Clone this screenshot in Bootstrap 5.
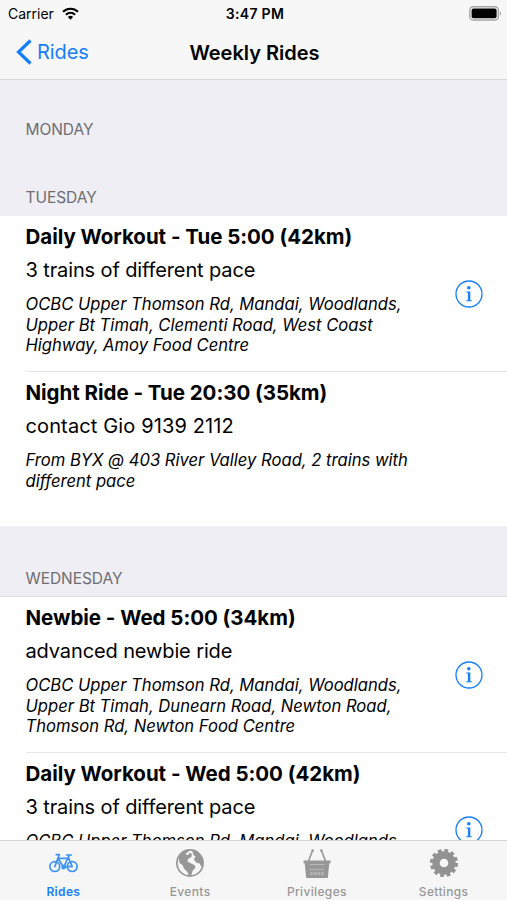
<!DOCTYPE html>
<html lang="en">
<head>
<meta charset="utf-8">
<meta name="viewport" content="width=device-width, initial-scale=1">
<title>Weekly Rides</title>
<link href="https://cdn.jsdelivr.net/npm/bootstrap@5.3.0/dist/css/bootstrap.min.css" rel="stylesheet">
<style>
  :root { --ios-blue: #157efb; --ios-gray: #979797; }
  body { font-family: Inter, "Liberation Sans", sans-serif; color: #000; background: #efeef4; font-feature-settings: "calt" 0; }
  .top-chrome { height: 80px; background: #f7f7f8; border-bottom: 1px solid #d9d9dc; }
  .status-row { height: 27px; font-size: 14px; padding: 0 5px 0 8px; }
  .status-row .carrier { letter-spacing: 0; }
  .status-time { font-weight: 600; font-size: 14px; letter-spacing: .3px; }
  .title-row { height: 52px; padding: 0 14px 0 16px; }
  .back-link { color: var(--ios-blue); font-size: 20px; letter-spacing: -.1px; gap: 5px; padding-top: 2px; }
  .page-title { font-size: 20px; font-weight: 600; letter-spacing: 0; line-height: 24px; }
  .day-head { height: 68px; padding: 0 25.5px 8px; font-size: 15.5px; line-height: 21px; color: #6d6d72; letter-spacing: -.06px; }
  .day-head.spaced { height: 71px; padding-bottom: 7px; border-bottom: 1px solid #dcdce0; }
  .ride { height: 155px; padding: 6px 24px 0 0; margin-left: 25.5px; }
  .ride + .ride { border-top: 1px solid #e6e6e8; }
  .ride-name { font-size: 20.5px; font-weight: 650; line-height: 30px; margin-bottom: 3px; letter-spacing: -.03px; }
  .ride-note { font-size: 20px; line-height: 30px; margin-bottom: 9px; letter-spacing: -.12px; }
  .ride-note.contact { letter-spacing: .13px; }
  .ride-route { font-size: 16.6px; line-height: 20.6px; font-style: italic; letter-spacing: 0; }
  .info-icon { margin-bottom: 6px; }
  .tabs { height: 60px; background: #f6f6f6; border-top: 1px solid #d4d4d6; font-size: 12px; font-weight: 500; color: var(--ios-gray); letter-spacing: .35px; }
  .tabs .tab-label { line-height: 16px; margin-top: 5px; }
  .tabs .current { color: var(--ios-blue); font-weight: 600; }
  svg { display: block; }
</style>
<script src="https://cdn.jsdelivr.net/npm/bootstrap@5.3.0/dist/js/bootstrap.bundle.min.js"></script>
</head>
<body class="vh-100 overflow-hidden d-flex flex-column">
<svg class="d-none">
  <symbol id="info" viewBox="0 0 28 28">
    <circle cx="14" cy="14" r="13" fill="none" stroke="#157efb" stroke-width="1.3"/>
    <circle cx="13.8" cy="7.8" r="1.8" fill="#157efb"/>
    <path d="M11.300 11.400h4v8.800h1.500v1.100h-5.500v-1.100h1.600v-7.700h-1.600z" fill="#157efb"/>
  </symbol>
</svg>

<header class="top-chrome flex-shrink-0">
  <div class="status-row row g-0 align-items-center">
    <div class="col d-flex align-items-center gap-2">
      <span class="carrier">Carrier</span>
      <svg width="17" height="13" viewBox="0 0 17 13">
        <g fill="none" stroke="#000" stroke-width="2.1">
          <path d="M1 4.800a10.600 10.600 0 0 1 15 0"/>
          <path d="M3.900 7.700a6.500 6.500 0 0 1 9.200 0"/>
        </g>
        <path d="M8.500 12.700 5.900 10a3.700 3.700 0 0 1 5.200 0z"/>
      </svg>
    </div>
    <div class="col-auto status-time">3:47 PM</div>
    <div class="col d-flex justify-content-end">
      <svg width="33" height="15" viewBox="0 0 33 15">
        <rect x=".8" y=".8" width="28.6" height="13.2" rx="3.6" fill="#f7f7f8" stroke="#a5a5a6" stroke-width="1.4"/>
        <rect x="2.6" y="2.6" width="25" height="9.6" rx="1.8"/>
        <path d="M30.900 5.200c1.500.7 1.500 3.700 0 4.400z" fill="#a5a5a6"/>
      </svg>
    </div>
  </div>
  <div class="title-row row g-0 align-items-center">
    <div class="col">
      <a class="back-link d-inline-flex align-items-center text-decoration-none" href="#">
        <svg width="16" height="26" viewBox="0 0 16 26"><path d="M14.500 1.500 2.500 13l12 11.500" fill="none" stroke="#157efb" stroke-width="3.2"/></svg>
        <span>Rides</span>
      </a>
    </div>
    <h1 class="page-title col-auto mb-0">Weekly Rides</h1>
    <div class="col"></div>
  </div>
</header>

<main class="flex-grow-1 overflow-hidden">
  <h2 class="day-head mb-0 fw-normal d-flex align-items-end">MONDAY</h2>
  <h2 class="day-head mb-0 fw-normal d-flex align-items-end">TUESDAY</h2>
  <section class="bg-white">
    <article class="ride d-flex justify-content-between">
      <div class="text-nowrap">
        <div class="ride-name">Daily Workout - Tue 5:00 (42km)</div>
        <div class="ride-note">3 trains of different pace</div>
        <div class="ride-route">OCBC Upper Thomson Rd, Mandai, Woodlands,<br>Upper Bt Timah, Clementi Road, West Coast<br>Highway, Amoy Food Centre</div>
      </div>
      <svg class="info-icon align-self-center" width="28" height="28"><use href="#info"/></svg>
    </article>
    <article class="ride">
      <div class="ride-name">Night Ride - Tue 20:30 (35km)</div>
      <div class="ride-note contact">contact Gio 9139 2112</div>
      <div class="ride-route">From BYX @ 403 River Valley Road, 2 trains with<br>different pace</div>
    </article>
  </section>
  <h2 class="day-head spaced mb-0 fw-normal d-flex align-items-end">WEDNESDAY</h2>
  <section class="bg-white">
    <article class="ride d-flex justify-content-between">
      <div class="text-nowrap">
        <div class="ride-name">Newbie - Wed 5:00 (34km)</div>
        <div class="ride-note">advanced newbie ride</div>
        <div class="ride-route">OCBC Upper Thomson Rd, Mandai, Woodlands,<br>Upper Bt Timah, Dunearn Road, Newton Road,<br>Thomson Rd, Newton Food Centre</div>
      </div>
      <svg class="info-icon align-self-center" width="28" height="28"><use href="#info"/></svg>
    </article>
    <article class="ride d-flex justify-content-between">
      <div class="text-nowrap">
        <div class="ride-name">Daily Workout - Wed 5:00 (42km)</div>
        <div class="ride-note">3 trains of different pace</div>
        <div class="ride-route">OCBC Upper Thomson Rd, Mandai, Woodlands,</div>
      </div>
      <svg class="info-icon align-self-center" width="28" height="28"><use href="#info"/></svg>
    </article>
  </section>
</main>

<nav class="tabs row g-0 flex-shrink-0 text-center pt-2">
  <div class="col current d-flex flex-column align-items-center">
    <svg width="30" height="30" viewBox="0 0 30 30" fill="none" stroke="#3d93f8" stroke-width="1.700">
      <circle cx="6.800" cy="17.600" r="4.900"/><circle cx="24.200" cy="17.600" r="4.900"/>
      <path d="M6.800 17.600 11.300 5.600H8.200M10.200 9.400H20.800M10.200 9.800l5.400 8.400M15.600 18.200 21.300 6.400M24.200 17.600h-8.600M20.600 9.200l3.600 8.400M18.600 6h4.800" stroke-linejoin="round" stroke-linecap="round"/>
      <circle cx="15.600" cy="18.200" r="1.500"/>
    </svg>
    <div class="tab-label">Rides</div>
  </div>
  <div class="col d-flex flex-column align-items-center">
    <svg width="30" height="30" viewBox="0 0 30 30">
      <circle cx="15" cy="14" r="13.100" fill="#f6f6f6" stroke="#979797" stroke-width="1.700"/>
      <path fill="#979797" d="M3.500 7.500C6 3.500 10 1 14.500 1l-1.700 2.600-2.300.6 1.200 1.900 2.200-.5.800-2 2.300 1.400-.6 3-3 1.800-1.200 2.500 4 2.200 3.300 1.500 1 2.500-3 3.500-1.200 4.200-2.500.8-1.300-4-3.500-3.500-1.500-3.500L4.500 14 4 10.500zM17 1.200c4 .5 8 3.200 9.800 7.300L28 14l-1.500 4-1.800-3.500-3.200-.8-2.700-3.200 1.700-3-2-1.500z"/>
    </svg>
    <div class="tab-label">Events</div>
  </div>
  <div class="col d-flex flex-column align-items-center">
    <svg width="30" height="30" viewBox="0 0 30 30">
      <path d="M6.500 12 10.600 1.500M23.500 12 19.400 1.500" stroke="#979797" stroke-width="1.600" fill="none"/>
      <circle cx="10.700" cy="1.500" r="1.300" fill="#979797"/><circle cx="19.300" cy="1.500" r="1.300" fill="#979797"/>
      <path d="M1.500 11.500h27v2.800h-1.200L25.800 29H4.200L2.700 14.300H1.500z" fill="#979797"/>
      <path d="M7.500 15.500h15M7.500 20.300h15" stroke="#bababa" stroke-width="1"/>
      <path d="M8 24.500h14" stroke="#b2b2b2" stroke-width="3.500" stroke-dasharray="2.900 .8"/>
    </svg>
    <div class="tab-label">Privileges</div>
  </div>
  <div class="col d-flex flex-column align-items-center">
    <svg width="30" height="30" viewBox="0 0 30 30" fill="none" stroke="#929292">
      <circle cx="15" cy="14" r="8" stroke-width="7.400"/>
      <circle cx="15" cy="14" r="12.500" stroke-width="3.200" stroke-dasharray="3.740 2.805"/>
    </svg>
    <div class="tab-label">Settings</div>
  </div>
</nav>
</body>
</html>
